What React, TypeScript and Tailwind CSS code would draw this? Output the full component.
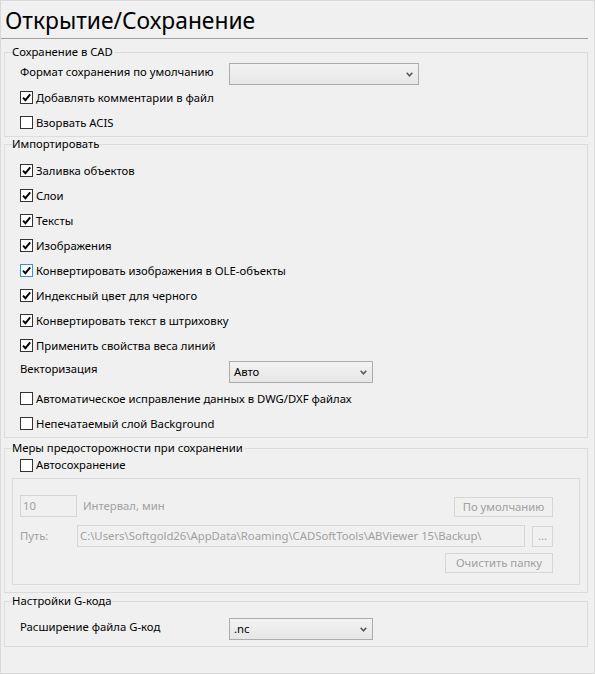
import type { ReactNode } from 'react';

interface CheckProps {
  label: string;
  checked?: boolean;
  focused?: boolean;
  rowClass?: string;
}

const Check = ({ label, checked, focused, rowClass = 'h-[25px]' }: CheckProps) => (
  <label className={`flex items-center ${rowClass}`}>
    <span
      className={`w-[13px] h-[13px] shrink-0 border bg-white flex items-center justify-center
        ${focused ? 'border-[#3c8fe3]' : 'border-[#333333]'}`}
    >
      {checked && (
        <svg width="9" height="9" viewBox="0 0 9 9">
          <path d="M1 4.6 L3.4 7.2 L8.2 1.4" fill="none" stroke="#000" strokeWidth="1.9" />
        </svg>
      )}
    </span>
    <span className="ml-[3px] leading-[16px]">{label}</span>
  </label>
);

const Select = ({ value, width }: { value: string; width: string }) => (
  <div
    className={`${width} h-[22px] shrink-0 border border-[#acacac] bg-linear-to-b from-[#f3f3f3] to-[#e6e6e6] flex items-center pl-[4px] pr-[5px]`}
  >
    <span className="flex-1 leading-[16px]">{value}</span>
    <svg width="7" height="5" viewBox="0 0 7 5">
      <path d="M0.7 0.8 L3.5 3.8 L6.3 0.8" fill="none" stroke="#555" strokeWidth="1.5" />
    </svg>
  </div>
);

const Grupo = ({ titulo, className, children }: { titulo: string; className: string; children: ReactNode }) => (
  <fieldset className={`ml-[3px] mr-[6px] border border-[#dcdcdc] px-[7px] ${className}`}>
    <legend className="leading-[14px] pr-[1px]">{titulo}</legend>
    {children}
  </fieldset>
);

const BotonGris = ({ children, className }: { children: ReactNode; className: string }) => (
  <div className={`border border-[#d6d6d6] bg-[#f0f0f0] text-[#a0a0a0] flex items-center justify-center leading-[16px] ${className}`}>
    {children}
  </div>
);

const importar = [
  { label: 'Заливка объектов', focused: false },
  { label: 'Слои', focused: false },
  { label: 'Тексты', focused: false },
  { label: 'Изображения', focused: false },
  { label: 'Конвертировать изображения в OLE-объекты', focused: true },
  { label: 'Индексный цвет для черного', focused: false },
  { label: 'Конвертировать текст в штриховку', focused: false },
  { label: 'Применить свойства веса линий', focused: false },
];

const App = () => {
  return (
    <div className="w-[595px] h-[674px] bg-[#f0f0f0] border border-[#d9d9d9] text-[11.3px] text-black font-['Noto_Sans',sans-serif]">
      {/* Titulo */}
      <div className="h-[38px] mr-[6px] border-b border-[#a0a0a0] pt-[4px] pl-[4px] text-[22.8px] leading-[32px]">
        Открытие/Сохранение
      </div>

      {/* Сохранение в CAD */}
      <Grupo titulo="Сохранение в CAD" className="mt-[6px]">
        <div className="pl-[8px] pt-[4px] pb-[1px]">
          <div className="flex items-start h-[22px]">
            <span className="w-[209px] mt-[1px] leading-[16px]">Формат сохранения по умолчанию</span>
            <Select value="" width="w-[190px]" />
          </div>
          <Check label="Добавлять комментарии в файл" checked />
          <Check label="Взорвать ACIS" />
        </div>
      </Grupo>

      {/* Импортировать */}
      <Grupo titulo="Импортировать" className="mt-0">
        <div className="pl-[8px] pt-[7px] pb-[1px]">
          {importar.map(item => (
            <Check key={item.label} label={item.label} checked focused={item.focused} />
          ))}
          <div className="flex items-center h-[28px]">
            <span className="w-[209px] mb-[6px] leading-[16px]">Векторизация</span>
            <Select value="Авто" width="w-[144px]" />
          </div>
          <Check label="Автоматическое исправление данных в DWG/DXF файлах" />
          <Check label="Непечатаемый слой Background" />
        </div>
      </Grupo>

      {/* Меры предосторожности */}
      <Grupo titulo="Меры предосторожности при сохранении" className="mt-[3px]">
        <div className="pb-[7px]">
          <div className="pl-[8px]">
            <Check label="Автосохранение" rowClass="h-[20px]" />
          </div>
          <div className="mt-[3px] border border-[#dcdcdc] pl-[7px] pr-[26px] pt-[16px] pb-[11px] text-[#a0a0a0]">
            <div className="flex items-end h-[22px]">
              <div className="w-[57px] h-[22px] border border-[#d6d6d6] pl-[2px] flex items-center leading-[16px]">10</div>
              <span className="ml-[6px] self-center leading-[16px]">Интервал, мин</span>
              <BotonGris className="ml-auto w-[99px] h-[20px]">По умолчанию</BotonGris>
            </div>
            <div className="flex items-center mt-[8px] h-[22px]">
              <span className="w-[57px] leading-[16px]">Путь:</span>
              <div className="w-[448px] h-[22px] border border-[#d6d6d6] pl-[2px] flex items-center leading-[16px] whitespace-nowrap overflow-hidden">
                C:\Users\Softgold26\AppData\Roaming\CADSoftTools\ABViewer 15\Backup\
              </div>
              <BotonGris className="ml-[7px] w-[21px] h-[21px]">...</BotonGris>
            </div>
            <div className="flex justify-end mt-[6px]">
              <BotonGris className="w-[108px] h-[20px]">Очистить папку</BotonGris>
            </div>
          </div>
        </div>
      </Grupo>

      {/* Настройки G-кода */}
      <Grupo titulo="Настройки G-кода" className="mt-[1px]">
        <div className="pl-[8px] pt-[10px] pb-[6px]">
          <div className="flex items-start h-[22px]">
            <span className="w-[209px] mt-[1px] leading-[16px]">Расширение файла G-код</span>
            <Select value=".nc" width="w-[144px]" />
          </div>
        </div>
      </Grupo>
    </div>
  );
};

export default App;
